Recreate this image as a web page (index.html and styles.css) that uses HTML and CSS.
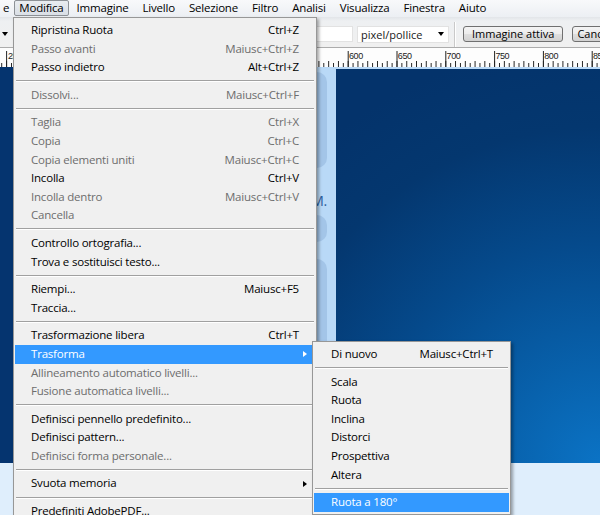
FILE: index.html
```html
<!DOCTYPE html>
<html lang="it">
<head>
<meta charset="utf-8">
<title>Modifica</title>
<link rel="stylesheet" href="styles.css">
</head>
<body>
<div class="app">
  <div class="menubar">
    <span class="mb-item first">e</span>
    <span class="mb-item active">Modifica</span>
    <span class="mb-item">Immagine</span>
    <span class="mb-item">Livello</span>
    <span class="mb-item">Selezione</span>
    <span class="mb-item">Filtro</span>
    <span class="mb-item">Analisi</span>
    <span class="mb-item">Visualizza</span>
    <span class="mb-item">Finestra</span>
    <span class="mb-item">Aiuto</span>
  </div>

  <div class="optionsbar">
    <span class="tri-down"></span>
    <div class="opt-input"></div>
    <div class="opt-select"><span>pixel/pollice</span><span class="tri-down"></span></div>
    <div class="opt-sep"></div>
    <div class="opt-btn">Immagine attiva</div>
    <div class="opt-btn cancel">Cancella</div>
  </div>

  <div class="ruler">
    <svg class="ruler-svg" width="600" height="19" viewBox="0 0 600 19">
      <defs>
        <pattern id="minor" x="6.1" y="0" width="9.76" height="19" patternUnits="userSpaceOnUse">
          <rect x="0" y="13" width="1" height="6" fill="#222"/>
          <rect x="4.88" y="15" width="1" height="4" fill="#222"/>
        </pattern>
        <pattern id="major" x="6.1" y="0" width="48.8" height="19" patternUnits="userSpaceOnUse">
          <rect x="0" y="3" width="1" height="16" fill="#222"/>
        </pattern>
      </defs>
      <rect x="0" y="0" width="600" height="19" fill="url(#minor)"/>
      <rect x="0" y="0" width="600" height="19" fill="url(#major)"/>
      <g class="ruler-labels">
        <text x="8" y="11">25</text>
        <text x="349" y="11">600</text>
        <text x="397.8" y="11">650</text>
        <text x="446.6" y="11">700</text>
        <text x="495.4" y="11">750</text>
        <text x="544.2" y="11">800</text>
        <text x="593" y="11">85</text>
      </g>
    </svg>
  </div>

  <div class="workspace">
    <div class="doc">
      <div class="doc-left"></div>
      <div class="doc-col">
        <div class="blob b1"></div>
        <div class="col-text">M.</div>
        <div class="blob b2"></div>
        <div class="blob b3"></div>
      </div>
      <div class="doc-main"></div>
    </div>
    <div class="pasteboard"></div>
  </div>

  <div class="menu main-menu">
    <div class="mi"><span>Ripristina Ruota</span><span>Ctrl+Z</span></div>
    <div class="mi dis"><span>Passo avanti</span><span>Maiusc+Ctrl+Z</span></div>
    <div class="mi"><span>Passo indietro</span><span>Alt+Ctrl+Z</span></div>
    <div class="sep"></div>
    <div class="mi dis"><span>Dissolvi...</span><span>Maiusc+Ctrl+F</span></div>
    <div class="sep"></div>
    <div class="mi dis"><span>Taglia</span><span>Ctrl+X</span></div>
    <div class="mi dis"><span>Copia</span><span>Ctrl+C</span></div>
    <div class="mi dis"><span>Copia elementi uniti</span><span>Maiusc+Ctrl+C</span></div>
    <div class="mi"><span>Incolla</span><span>Ctrl+V</span></div>
    <div class="mi dis"><span>Incolla dentro</span><span>Maiusc+Ctrl+V</span></div>
    <div class="mi dis"><span>Cancella</span></div>
    <div class="sep"></div>
    <div class="mi"><span>Controllo ortografia...</span></div>
    <div class="mi"><span>Trova e sostituisci testo...</span></div>
    <div class="sep"></div>
    <div class="mi"><span>Riempi...</span><span>Maiusc+F5</span></div>
    <div class="mi"><span>Traccia...</span></div>
    <div class="sep"></div>
    <div class="mi"><span>Trasformazione libera</span><span>Ctrl+T</span></div>
    <div class="mi hl"><span>Trasforma</span><span class="tri-right"></span></div>
    <div class="mi dis"><span>Allineamento automatico livelli...</span></div>
    <div class="mi dis"><span>Fusione automatica livelli...</span></div>
    <div class="sep"></div>
    <div class="mi"><span>Definisci pennello predefinito...</span></div>
    <div class="mi"><span>Definisci pattern...</span></div>
    <div class="mi dis"><span>Definisci forma personale...</span></div>
    <div class="sep"></div>
    <div class="mi"><span>Svuota memoria</span><span class="tri-right"></span></div>
    <div class="sep"></div>
    <div class="mi"><span>Predefiniti AdobePDF...</span></div>
  </div>

  <div class="menu sub-menu">
    <div class="mi"><span>Di nuovo</span><span>Maiusc+Ctrl+T</span></div>
    <div class="sep"></div>
    <div class="mi"><span>Scala</span></div>
    <div class="mi"><span>Ruota</span></div>
    <div class="mi"><span>Inclina</span></div>
    <div class="mi"><span>Distorci</span></div>
    <div class="mi"><span>Prospettiva</span></div>
    <div class="mi"><span>Altera</span></div>
    <div class="sep"></div>
    <div class="mi hl"><span>Ruota a 180°</span></div>
  </div>
</div>
</body>
</html>
```

FILE: styles.css
```css
html, body {
  margin: 0;
  padding: 0;
}
body {
  width: 600px;
  height: 515px;
  overflow: hidden;
  font-family: "Open Sans", "Noto Sans", sans-serif;
  font-size: 11.5px;
  letter-spacing: -0.2px;
  color: #000;
  background: #dfeefc;
}
.app {
  position: relative;
  width: 600px;
  height: 515px;
  overflow: hidden;
}

/* menu bar */
.menubar {
  height: 17px;
  display: flex;
  align-items: flex-start;
  background: linear-gradient(#f8f9fb, #eceff3);
  white-space: nowrap;
}
.mb-item {
  flex-shrink: 0;
  height: 15px;
  line-height: 14px;
  margin-top: 1px;
  padding: 0 7px;
}
.mb-item.first {
  padding: 0 4px 0 3px;
}
.mb-item.active {
  margin-left: 1px;
  margin-right: 1px;
  padding: 0 4px;
  border: 1px solid #8d9196;
  border-radius: 2px;
  height: 14px;
  margin-top: 0;
  background: linear-gradient(#e9ecf0, #dadfe6);
}

/* options bar */
.optionsbar {
  box-sizing: border-box;
  height: 30px;
  padding-top: 4px;
  display: flex;
  align-items: center;
  background: linear-gradient(#e2e5e9 0, #eef0f2 4px, #f0f0f0 100%);
  letter-spacing: 0;
}
.optionsbar > * {
  flex-shrink: 0;
}
.tri-down {
  width: 0;
  height: 0;
  border-left: 3.5px solid transparent;
  border-right: 3.5px solid transparent;
  border-top: 4px solid #000;
}
.optionsbar > .tri-down {
  margin-left: 2px;
}
.opt-input {
  margin-left: 264px;
  width: 79px;
  height: 14px;
  background: #fff;
  border: 1px solid #e2e2e2;
}
.opt-select {
  margin-left: 4px;
  width: 84px;
  height: 15px;
  padding: 0 3px 0 3px;
  background: #fff;
  border: 1px solid #e2e2e2;
  display: flex;
  align-items: center;
  justify-content: space-between;
  font-size: 11px;
  color: #1a1a1a;
}
.opt-select .tri-down {
  margin-right: 1px;
}
.opt-sep {
  align-self: stretch;
  margin: 1px 0 0 5px;
  width: 1px;
  border-right: 1px solid #fff;
  background: #c9c9c9;
}
.opt-btn {
  margin-left: 7px;
  height: 14px;
  line-height: 14px;
  padding: 0 8px;
  border: 1px solid #707070;
  border-radius: 3px;
  background: linear-gradient(#f4f4f4 0%, #ececec 48%, #dedede 52%, #d2d2d2 100%);
  font-size: 11px;
  white-space: nowrap;
}
.opt-btn.cancel {
  margin-left: 9px;
  padding: 0 4px;
}

/* ruler */
.ruler {
  height: 19px;
  border-top: 1px solid #acacac;
  background: #fdfdfd;
}
.ruler-svg {
  display: block;
  shape-rendering: crispEdges;
}
.ruler-labels text {
  font-family: "Liberation Sans", Arial, sans-serif;
  font-size: 9px;
  letter-spacing: -0.4px;
  fill: #1b1b1b;
}

/* workspace / document */
.workspace {
  height: 448px;
  display: flex;
  flex-direction: column;
}
.doc {
  height: 396px;
  display: flex;
}
.doc-left {
  width: 200px;
  background: #05346f;
}
.doc-col {
  width: 136px;
  background: #b9d9f7;
  display: flex;
  flex-direction: column;
}
.blob {
  width: 127px;
  background: #a3c5e8;
  border-radius: 0 10px 10px 0;
}
.b1 {
  margin-top: 5px;
  height: 96px;
}
.col-text {
  margin-top: 26px;
  width: 127px;
  text-align: right;
  font-size: 14px;
  line-height: 14px;
  color: #2d5f9e;
}
.b2 {
  margin-top: 7px;
  height: 27px;
}
.b3 {
  margin-top: 17px;
  height: 150px;
}
.doc-main {
  flex: 1;
  border-top: 2px solid #b9d9f7;
  background: radial-gradient(ellipse 430px 420px at 100% 100%, #0b73c5 0%, #0862ad 22%, #054a8c 52%, #04376f 80%, #04336b 100%);
}
.pasteboard {
  flex: 1;
  background: #dfeefc;
}

/* menus */
.menu {
  position: absolute;
  background: #f0f0f0;
  border: 1px solid #979797;
  box-shadow: 2px 2px 3px rgba(0, 0, 0, 0.35);
  padding: 3px 1px 2px;
  white-space: nowrap;
}
.main-menu {
  left: 13px;
  top: 17px;
  width: 300px;
}
.sub-menu {
  left: 312px;
  top: 341px;
  width: 195px;
}
.mi {
  height: 18.6px;
  line-height: 18.6px;
  padding: 0 16px;
  display: flex;
  justify-content: space-between;
  align-items: center;
}
.sub-menu .mi {
  padding: 0 16px 0 17px;
}
.mi.dis {
  color: #6d6d6d;
}
.mi.hl {
  background: #3399ff;
  color: #fff;
}
.sep {
  height: 1px;
  margin: 3.5px 1px 3.5px 1px;
  background: #a0a0a0;
  border-bottom: 1px solid #fff;
}
.tri-right {
  width: 0;
  height: 0;
  margin-right: -8px;
  border-top: 3.5px solid transparent;
  border-bottom: 3.5px solid transparent;
  border-left: 4px solid #000;
}
.mi.hl .tri-right {
  border-left-color: #fff;
}
```
